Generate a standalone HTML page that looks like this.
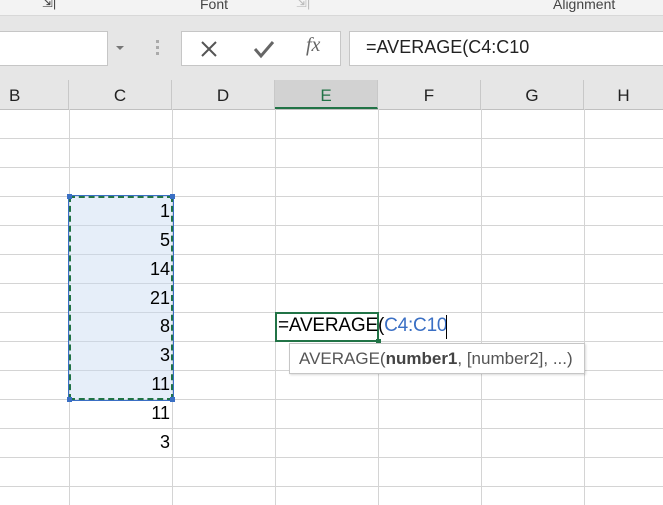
<!DOCTYPE html><html><head><style>
body{margin:0;width:663px;height:505px;overflow:hidden;position:relative;font-family:"Liberation Sans",sans-serif;background:#fff}
.a{position:absolute}
.vl{position:absolute;top:109px;bottom:0;width:1px;background:#d4d4d4}
.hl{position:absolute;left:0;right:0;height:1px;background:#d4d4d4}
.ch{position:absolute;top:80px;height:29px;line-height:31px;text-align:center;font-size:17px;color:#222;border-right:1px solid #c8c8c8;box-sizing:border-box}
.n{position:absolute;left:69px;width:101px;text-align:right;font-size:18px;color:#000}
</style></head><body>
<div class="a" style="left:0;top:0;width:663px;height:15px;background:#f3f3f3;border-bottom:1px solid #d8d8d8;font-size:14px;color:#444">
<span class="a" style="left:42px;top:-5px;font-size:13px">⇲|</span>
<span class="a" style="left:200px;top:-4px">Font</span>
<span class="a" style="left:296px;top:-5px;color:#bbb;font-size:13px">⇲|</span>
<span class="a" style="left:553px;top:-4px">Alignment</span></div>
<div class="a" style="left:0;top:16px;width:663px;height:64px;background:#e6e6e6"></div>
<div class="a" style="left:-2px;top:31px;width:108px;height:33px;background:#fff;border:1px solid #c6c6c6"></div>
<div class="a" style="left:116px;top:46px;width:0;height:0;border-left:4px solid transparent;border-right:4px solid transparent;border-top:4px solid #777"></div>
<div class="a" style="left:156px;top:40px;width:3px;height:3px;background:#aaa;box-shadow:0 6px #aaa,0 12px #aaa"></div>
<div class="a" style="left:181px;top:31px;width:158px;height:33px;background:#fff;border:1px solid #c6c6c6"></div>
<svg class="a" style="left:199px;top:39px" width="20" height="20"><path d="M3 3L17 17M17 3L3 17" stroke="#555" stroke-width="2"/></svg>
<svg class="a" style="left:252px;top:39px" width="24" height="20"><path d="M3 10L9 17L21 3" stroke="#666" stroke-width="3" fill="none"/></svg>
<span class="a" style="left:306px;top:34px;font-family:'Liberation Serif',serif;font-style:italic;font-size:20px;color:#666">fx</span>
<div class="a" style="left:349px;top:31px;width:320px;height:33px;background:#fff;border:1px solid #c6c6c6"></div>
<span class="a" style="left:366px;top:37px;font-size:18px;color:#222">=AVERAGE(C4:C10</span>
<div class="a" style="left:0;top:80px;width:663px;height:29px;background:#e6e6e6;border-bottom:1px solid #c0c0c0"></div>
<div class="ch" style="left:0;width:69px;text-align:left;padding-left:9px">B</div>
<div class="ch" style="left:69px;width:103px">C</div>
<div class="ch" style="left:172px;width:103px">D</div>
<div class="ch" style="left:275px;width:103px;background:#d2d2d2;border-bottom:2px solid #217346;color:#217346">E</div>
<div class="ch" style="left:378px;width:103px">F</div>
<div class="ch" style="left:481px;width:103px">G</div>
<div class="ch" style="left:584px;width:79px;border:none">H</div>
<div class="hl" style="top:138px"></div><div class="hl" style="top:167px"></div><div class="hl" style="top:196px"></div><div class="hl" style="top:225px"></div><div class="hl" style="top:254px"></div><div class="hl" style="top:283px"></div><div class="hl" style="top:312px"></div><div class="hl" style="top:341px"></div><div class="hl" style="top:370px"></div><div class="hl" style="top:399px"></div><div class="hl" style="top:428px"></div><div class="hl" style="top:457px"></div><div class="hl" style="top:486px"></div>
<div class="vl" style="left:69px"></div><div class="vl" style="left:172px"></div><div class="vl" style="left:275px"></div><div class="vl" style="left:378px"></div><div class="vl" style="left:481px"></div><div class="vl" style="left:584px"></div>
<div class="a" style="left:69px;top:196px;width:104px;height:204px;background:rgba(200,218,242,.45);box-sizing:border-box;border:2px dashed #217346;outline:1px solid #3a6fc4"></div>
<div class="a" style="left:67px;top:194px;width:5px;height:5px;background:#3a6fc4"></div>
<div class="a" style="left:170px;top:194px;width:5px;height:5px;background:#3a6fc4"></div>
<div class="a" style="left:67px;top:397px;width:5px;height:5px;background:#3a6fc4"></div>
<div class="a" style="left:170px;top:397px;width:5px;height:5px;background:#3a6fc4"></div>
<div class="n" style="top:201px">1</div><div class="n" style="top:230px">5</div><div class="n" style="top:259px">14</div><div class="n" style="top:288px">21</div><div class="n" style="top:316px">8</div><div class="n" style="top:345px">3</div><div class="n" style="top:374px">11</div><div class="n" style="top:403px">11</div><div class="n" style="top:432px">3</div>
<div class="a" style="left:275px;top:312px;width:104px;height:30px;box-sizing:border-box;border:2px solid #217346;background:#fff"></div>
<div class="a" style="left:376px;top:339px;width:5px;height:5px;background:#217346"></div>
<span class="a" style="left:278px;top:315px;font-size:19px;color:#000;letter-spacing:-0.2px">=AVERAGE(<span style="color:#3a6fc4">C4:C10</span></span>
<div class="a" style="left:446px;top:315px;width:1px;height:24px;background:#000"></div>
<div class="a" style="left:289px;top:343px;width:296px;height:31px;background:#fff;border:1px solid #c6c6c6;box-shadow:1px 1px 2px rgba(0,0,0,.15);font-size:17px;color:#555;line-height:30px;padding-left:9px;box-sizing:border-box;white-space:nowrap">AVERAGE(<b style="color:#444">number1</b>, [number2], ...)</div>
</body></html>
